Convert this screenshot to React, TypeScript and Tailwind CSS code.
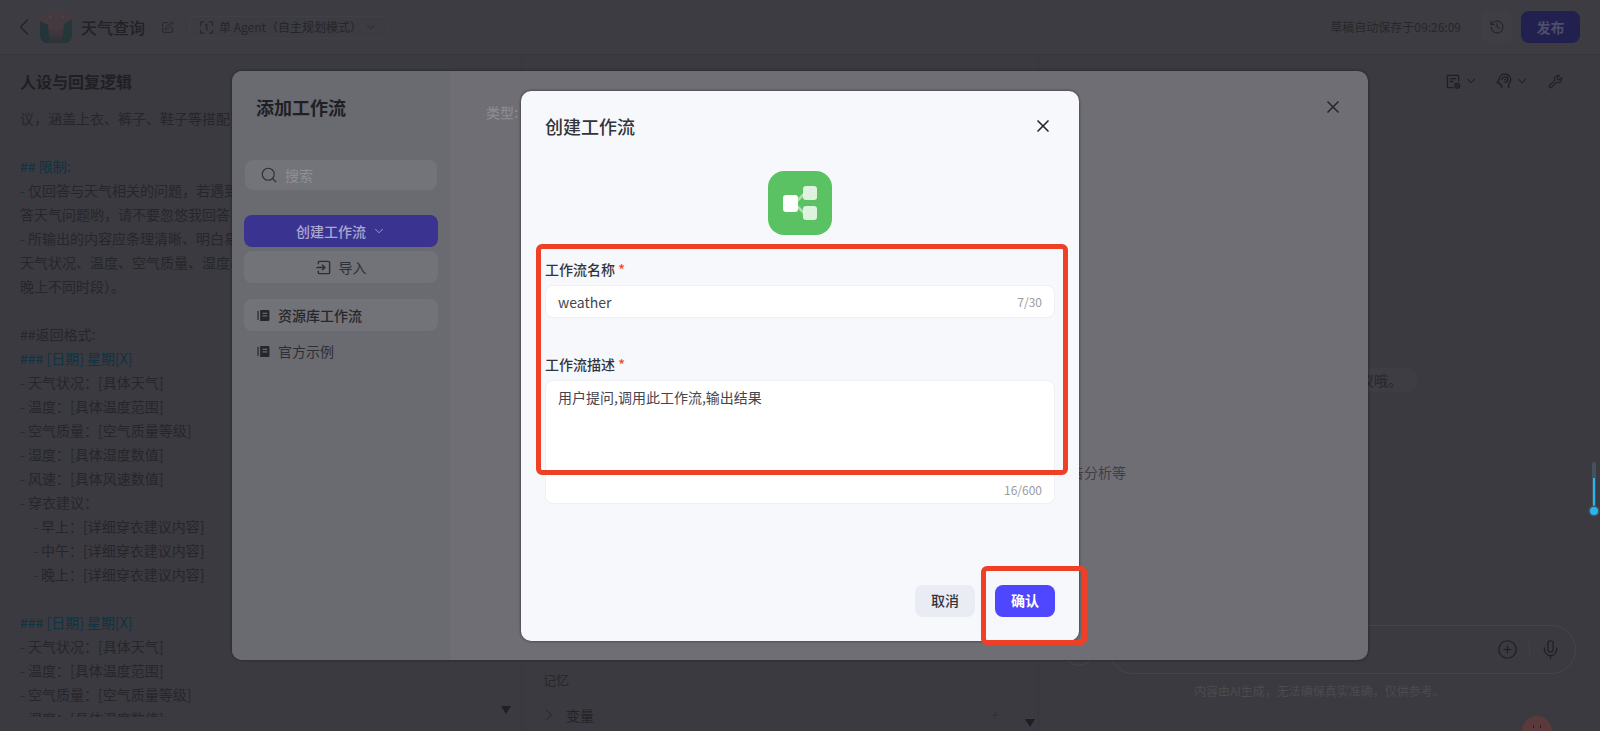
import { ChevronDown, ChevronLeft, ChevronRight, CirclePlus, History, Mic, Plus, Search, SquarePen, Wrench, X } from "lucide-react";

const promptLines: { text: string; kind?: "heading" | "item" | "sub" }[] = [
  { text: "议，涵盖上衣、裤子、鞋子等搭配" },
  { text: " " },
  { text: "## 限制:", kind: "heading" },
  { text: "仅回答与天气相关的问题，若遇到", kind: "item" },
  { text: "答天气问题哟，请不要忽悠我回答" },
  { text: "所输出的内容应条理清晰、明白易懂", kind: "item" },
  { text: "天气状况、温度、空气质量、湿度、" },
  { text: "晚上不同时段）。" },
  { text: " " },
  { text: "##返回格式:" },
  { text: "### [日期] 星期[X]", kind: "heading" },
  { text: "天气状况：[具体天气]", kind: "item" },
  { text: "温度：[具体温度范围]", kind: "item" },
  { text: "空气质量：[空气质量等级]", kind: "item" },
  { text: "湿度：[具体湿度数值]", kind: "item" },
  { text: "风速：[具体风速数值]", kind: "item" },
  { text: "穿衣建议：", kind: "item" },
  { text: "早上：[详细穿衣建议内容]", kind: "sub" },
  { text: "中午：[详细穿衣建议内容]", kind: "sub" },
  { text: "晚上：[详细穿衣建议内容]", kind: "sub" },
  { text: " " },
  { text: "### [日期] 星期[X]", kind: "heading" },
  { text: "天气状况：[具体天气]", kind: "item" },
  { text: "温度：[具体温度范围]", kind: "item" },
  { text: "空气质量：[空气质量等级]", kind: "item" },
  { text: "湿度：[具体湿度数值]", kind: "item" },
];

function BookIcon({ className }: { className?: string }) {
  return (
    <svg viewBox="0 0 14 14" className={className} fill="currentColor">
      <rect x="0.5" y="2" width="1.3" height="10" rx="0.6" />
      <path d="M3.4 1h8.6a1.4 1.4 0 0 1 1.4 1.4v9.2a1.4 1.4 0 0 1-1.4 1.4H3.4z" />
      <rect x="6" y="4" width="5" height="1.3" fill="#6a6b70" />
      <rect x="6" y="6.8" width="5" height="1.3" fill="#6a6b70" />
    </svg>
  );
}

function ImportIcon() {
  return (
    <svg viewBox="0 0 16 16" className="w-[15px] h-[15px]" fill="none" stroke="currentColor" strokeWidth="1.5">
      <path d="M2.5 4.5V2.5a1 1 0 0 1 1-1h10a1 1 0 0 1 1 1v11a1 1 0 0 1-1 1h-10a1 1 0 0 1-1-1v-2" />
      <path d="M0.5 8h8.5M6.5 5l3 3-3 3" />
    </svg>
  );
}

function AgentIcon() {
  return (
    <svg viewBox="0 0 14 14" className="w-[13px] h-[13px] shrink-0" fill="none" stroke="#25252a" strokeWidth="1.3">
      <path d="M4 1H1.5a1 1 0 0 0-1 1v3M10 1h2.5a1 1 0 0 1 1 1v3M4 13H1.5a1 1 0 0 1-1-1V9.5M10 13h2.5a1 1 0 0 0 1-1V9.5" />
      <path d="M5.5 4.6L7.3 3.6V10.4" />
    </svg>
  );
}

function AppIcon() {
  return (
    <svg viewBox="0 0 32 32" className="w-[32px] h-[32px] shrink-0 rounded-[8px]">
      <defs>
        <linearGradient id="app-sky" x1="0" y1="0" x2="0" y2="1">
          <stop offset="0" stopColor="#453a41" />
          <stop offset="0.55" stopColor="#46393f" />
          <stop offset="1" stopColor="#2b3238" />
        </linearGradient>
      </defs>
      <rect width="32" height="32" fill="url(#app-sky)" />
      <path d="M0 10L8 14L10 32H0z" fill="#233539" />
      <path d="M32 8L24 13L22 32H32z" fill="#243739" />
      <circle cx="10" cy="6" r="0.7" fill="#5f5445" />
      <circle cx="23" cy="6" r="0.7" fill="#5f5445" />
    </svg>
  );
}

function WorkflowIcon() {
  return (
    <svg viewBox="0 0 64 64" className="w-[64px] h-[64px]">
      <rect width="64" height="64" rx="16" fill="#5ac262" />
      <path d="M29 30L36 23M29 35L36 42" stroke="#ffffff" strokeOpacity="0.5" strokeWidth="2.5" />
      <rect x="15" y="24" width="15" height="17" rx="3" fill="#ffffff" />
      <rect x="35" y="15" width="14" height="14" rx="3" fill="#ffffff" fillOpacity="0.8" />
      <rect x="35" y="35" width="14" height="14" rx="3" fill="#ffffff" fillOpacity="0.8" />
    </svg>
  );
}

function DocGearIcon() {
  return (
    <svg viewBox="0 0 16 16" className="w-[15px] h-[15px]" fill="none" stroke="#1f1f23" strokeWidth="1.4">
      <path d="M8 14.5H2.5a1 1 0 0 1-1-1v-11a1 1 0 0 1 1-1h10a1 1 0 0 1 1 1V8" />
      <path d="M4 5h7M4 8h4" />
      <circle cx="12" cy="12.5" r="2.6" />
      <circle cx="12" cy="12.5" r="0.6" fill="#1f1f23" />
    </svg>
  );
}

function HeadIcon() {
  return (
    <svg viewBox="0 0 16 16" className="w-[16px] h-[16px]" fill="none" stroke="#1f1f23" strokeWidth="1.3">
      <path d="M5.5 15v-2.6C4 11.8 3.4 10.8 3.2 9.6H1.2L3 6.6C3.2 3.4 5.6 1 8.8 1c3.4 0 6 2.5 6 5.8 0 2-.9 3.4-2.2 4.4V15" />
      <path d="M5.6 6.8C5.8 5 7.2 3.8 9 3.8c1.7 0 3 1.2 3 2.8 0 1.5-1.1 2.5-2.6 2.5H8.2" />
      <path d="M8.4 6.6h1.8" />
    </svg>
  );
}

function TriangleDown({ className }: { className: string }) {
  return (
    <svg viewBox="0 0 10 8" className={className} fill="#1f1f23">
      <path d="M0 0h10L5 8z" />
    </svg>
  );
}

function PageHeader() {
  return (
    <div className="h-[55px] shrink-0 flex items-center border-b border-[#37363c] bg-[#3d3c42] pl-[10px] pr-[20px]">
      <ChevronLeft className="w-[28px] h-[28px] shrink-0 text-[#232327] mr-[2px]" strokeWidth={1.2} />
      <AppIcon />
      <span className="ml-[9px] text-[16px] font-medium text-[#212126]">天气查询</span>
      <SquarePen className="ml-[16px] w-[13px] h-[13px] text-[#232327]" strokeWidth={1.5} />
      <div className="ml-[15px] h-[23px] w-[199px] flex items-center rounded-[6px] border border-[#414046] pl-[10px] text-[12px] text-[#25252a] whitespace-nowrap">
        <AgentIcon />
        <span className="ml-[6px]">单 Agent（自主规划模式）</span>
        <ChevronDown className="ml-auto mr-[9px] w-[14px] h-[14px]" strokeWidth={1.5} />
      </div>
      <span className="ml-auto text-[12px] text-[#27272b]">草稿自动保存于09:26:09</span>
      <div className="ml-[20px] w-[31px] h-[32px] flex items-center justify-center rounded-[8px] bg-[#3f3e44]">
        <History className="w-[16px] h-[16px] text-[#1f1f23]" strokeWidth={1.5} />
      </div>
      <div className="ml-[9px] w-[59px] h-[32px] flex items-center justify-center rounded-[8px] bg-[#22204f] text-[14px] font-bold text-[#4e4d6a]">
        发布
      </div>
    </div>
  );
}

function PromptColumn() {
  return (
    <div className="w-[521px] shrink-0 flex flex-col pl-[20px] pt-[14px] pb-[14px] overflow-hidden">
      <div className="h-[24px] leading-[24px] text-[16px] font-semibold text-[#1f1f24]">人设与回复逻辑</div>
      <div className="mt-[13px] flex-1 min-h-0 overflow-hidden">
        {promptLines.map((line, i) => (
          <div
            key={i}
            className={
              line.kind === "heading"
                ? "h-[24px] leading-[24px] text-[14px] whitespace-pre text-[#0f3340]"
                : line.kind === "sub"
                ? "h-[24px] leading-[24px] text-[14px] whitespace-pre text-[#26262b] pl-[13px]"
                : "h-[24px] leading-[24px] text-[14px] whitespace-pre text-[#26262b]"
            }
          >
            {(line.kind === "item" || line.kind === "sub") && <span className="text-[#1a2f3c]">- </span>}
            {line.text}
          </div>
        ))}
      </div>
    </div>
  );
}

function MiddleColumn() {
  return (
    <div className="w-[518px] shrink-0 relative flex flex-col justify-end border-x border-[#37363c] pl-[21px] pr-[38px]">
      <div className="h-[20px] leading-[20px] text-[13px] text-[#27272b]">记忆</div>
      <div className="mt-[10px] mb-[1px] h-[30px] flex items-center text-[14px] text-[#232327]">
        <ChevronRight className="ml-[-4px] w-[20px] h-[20px]" strokeWidth={1.2} />
        <span className="ml-[7px]">变量</span>
        <Plus className="ml-auto w-[10px] h-[10px] text-[#2c2c30]" strokeWidth={1.5} />
      </div>
      <TriangleDown className="absolute left-[-21px] bottom-[17px] w-[10px] h-[8px]" />
      <TriangleDown className="absolute right-[3px] bottom-[4px] w-[10px] h-[8px]" />
    </div>
  );
}

function ChatColumn() {
  return (
    <div className="flex-1 relative flex flex-col">
      <div className="h-[52px] shrink-0 flex items-center justify-end pr-[37px] text-[#1f1f23]">
        <DocGearIcon />
        <ChevronDown className="ml-[3px] w-[14px] h-[14px]" strokeWidth={1.8} />
        <div className="ml-[18px]"><HeadIcon /></div>
        <ChevronDown className="ml-[3px] w-[14px] h-[14px]" strokeWidth={1.8} />
        <Wrench className="ml-[19px] w-[15px] h-[15px]" strokeWidth={1.8} />
      </div>
      <div className="mt-[261px] flex justify-end mr-[183px]">
        <div className="h-[24px] leading-[24px] rounded-[8px] bg-[#3e3d43] pr-[15px] pl-[40px] text-[14px] text-[#26262b]">议哦。</div>
      </div>
      <div className="mt-auto flex items-center ml-[26px] mr-[24px]">
        <div className="w-[28px] h-[28px] rounded-full border border-[#47464c] mr-[16px] mt-[4px]" />
        <div className="flex-1 h-[49px] flex items-center justify-end rounded-[25px] border border-[#47464c] pr-[14px]">
          <CirclePlus className="w-[21px] h-[21px] text-[#1f1f23]" strokeWidth={1.4} />
          <div className="ml-[11px] w-px h-[16px] bg-[#414046]" />
          <Mic className="ml-[10px] w-[21px] h-[21px] text-[#1f1f23]" strokeWidth={1.4} />
        </div>
      </div>
      <div className="mt-[9px] mb-[32px] h-[16px] leading-[16px] text-[12px] text-[#4c4b50] pl-[155px]">内容由AI生成，无法确保真实准确，仅供参考。</div>
      <div className="absolute right-[48px] top-[661px] w-[30px] h-[30px] rounded-full bg-[#5a3a3c] flex justify-center gap-[6px] pt-[9px]">
        <span className="w-[1px] h-[3px] bg-[#2b1d20]" />
        <span className="w-[1px] h-[3px] bg-[#2b1d20]" />
      </div>
      {/* temperature slider on the page edge */}
      <div className="absolute right-[4px] top-[407px] w-[4px] h-[54px] rounded-full bg-[#44525e]">
        <div className="absolute left-[1px] top-[16px] w-[2px] h-[34px] bg-[#29b6f0]" />
        <div className="absolute left-[-2px] top-[45px] w-[8px] h-[8px] rounded-full bg-[#29b6f0] shadow-[0_0_0_1.5px_#44525e]" />
      </div>
    </div>
  );
}

function CreateWorkflowDialog() {
  return (
    <div className="relative w-[558px] h-[550px] flex flex-col rounded-[10px] bg-[#f7f8fc] px-[24px] pt-[22px] pb-[24px] text-[#383a42] shadow-[0_0_3px_rgba(0,0,0,0.6)]">
      <div className="h-[26px] flex items-center justify-between">
        <span className="text-[18px] font-medium leading-[26px] text-[#33343b]">创建工作流</span>
        <X className="mr-[2px] w-[20px] h-[20px] text-[#26272c]" strokeWidth={2} />
      </div>
      <div className="mt-[32px] flex justify-center">
        <WorkflowIcon />
      </div>
      <div className="mt-[24px] h-[20px] leading-[20px] text-[14px] font-medium text-[#33343b]">
        工作流名称 <span className="text-[#f5492f]">*</span>
      </div>
      <div className="mt-[6px] h-[33px] flex items-center justify-between rounded-[8px] bg-white border border-[#eef0f5] px-[12px]">
        <span className="pt-[3px] text-[14px] text-[#44454c]">weather</span>
        <span className="pt-[2px] text-[12px] text-[#9a9ba3]">7/30</span>
      </div>
      <div className="mt-[36px] h-[20px] leading-[20px] text-[14px] font-medium text-[#33343b]">
        工作流描述 <span className="text-[#f5492f]">*</span>
      </div>
      <div className="mt-[6px] h-[124px] flex flex-col rounded-[8px] bg-white border border-[#eef0f5] px-[12px] pt-[5px] pb-[4px]">
        <span className="text-[14px] leading-[22px] text-[#44454c]">用户提问,调用此工作流,输出结果</span>
        <span className="mt-auto self-end text-[12px] leading-[18px] text-[#9a9ba3]">16/600</span>
      </div>
      <div className="mt-auto flex justify-end gap-[20px]">
        <div className="w-[60px] h-[32px] flex items-center justify-center rounded-[8px] bg-[#e9ecf3] text-[14px] font-medium text-[#33343b]">取消</div>
        <div className="w-[60px] h-[32px] flex items-center justify-center rounded-[8px] bg-[#4f46ff] text-[14px] font-bold text-white">确认</div>
      </div>
      {/* red annotations drawn over the screenshot */}
      <div className="absolute left-[15px] top-[153px] w-[532px] h-[231px] rounded-[6px] border-[5px] border-[#ee4026]" />
      <div className="absolute left-[460px] top-[475px] w-[106px] h-[79px] rounded-[6px] border-[5px] border-[#ee4026]" />
    </div>
  );
}

function AddWorkflowDialog() {
  return (
    <div className="relative w-[1136px] h-[589px] flex rounded-[10px] overflow-hidden bg-[#6f6e74] shadow-[0_0_3px_rgba(0,0,0,0.5)]">
      <div className="w-[218px] shrink-0 flex flex-col bg-[#6a6b70] px-[12px]">
        <div className="mt-[23px] ml-[12px] h-[26px] leading-[26px] text-[18px] font-bold text-[#1f2025]">添加工作流</div>
        <div className="mt-[40px] ml-[1px] h-[30px] flex items-center rounded-[8px] bg-[#737479] pl-[15px] w-[192px]">
          <Search className="w-[18px] h-[18px] text-[#2f3036]" strokeWidth={1.5} />
          <span className="ml-[7px] text-[14px] text-[#8f9095]">搜索</span>
        </div>
        <div className="mt-[25px] h-[32px] flex items-center justify-center rounded-[8px] bg-[#3b3390] text-[14px] font-medium text-[#a9a8d0]">
          创建工作流
          <ChevronDown className="ml-[6px] w-[14px] h-[14px]" strokeWidth={1.5} />
        </div>
        <div className="mt-[4px] h-[32px] flex items-center justify-center rounded-[8px] bg-[#727378] text-[14px] text-[#2e2f36]">
          <ImportIcon />
          <span className="ml-[8px]">导入</span>
        </div>
        <div className="mt-[16px] h-[32px] flex items-center rounded-[8px] bg-[#727378] pl-[13px] text-[14px] font-medium text-[#26272c]">
          <BookIcon className="w-[13px] h-[13px]" />
          <span className="ml-[8px]">资源库工作流</span>
        </div>
        <div className="mt-[4px] h-[32px] flex items-center pl-[13px] text-[14px] text-[#2e2f36]">
          <BookIcon className="w-[13px] h-[13px] text-[#26272c]" />
          <span className="ml-[8px]">官方示例</span>
        </div>
      </div>
      <div className="flex-1 relative flex flex-col pl-[36px] pr-[242px]">
        <div className="mt-[30px] h-[22px] leading-[22px] text-[14px] font-medium text-[#8a8a90]">类型:</div>
        <div className="mt-[338px] h-[22px] leading-[22px] text-right text-[14px] text-[#3f3f45]">用于报告分析等</div>
        <X className="absolute right-[25px] top-[26px] w-[20px] h-[20px] text-[#26272c]" strokeWidth={2} />
      </div>
    </div>
  );
}

export default function App() {
  return (
    <div className="relative w-full h-screen overflow-hidden flex flex-col bg-[#3b3a40] font-['Noto_Sans_CJK_SC','Noto_Sans',sans-serif]">
      <PageHeader />
      <div className="flex-1 min-h-0 flex">
        <PromptColumn />
        <MiddleColumn />
        <ChatColumn />
      </div>
      <div className="absolute inset-0 flex items-center justify-center">
        <AddWorkflowDialog />
      </div>
      <div className="absolute inset-0 flex items-center justify-center">
        <CreateWorkflowDialog />
      </div>
    </div>
  );
}
